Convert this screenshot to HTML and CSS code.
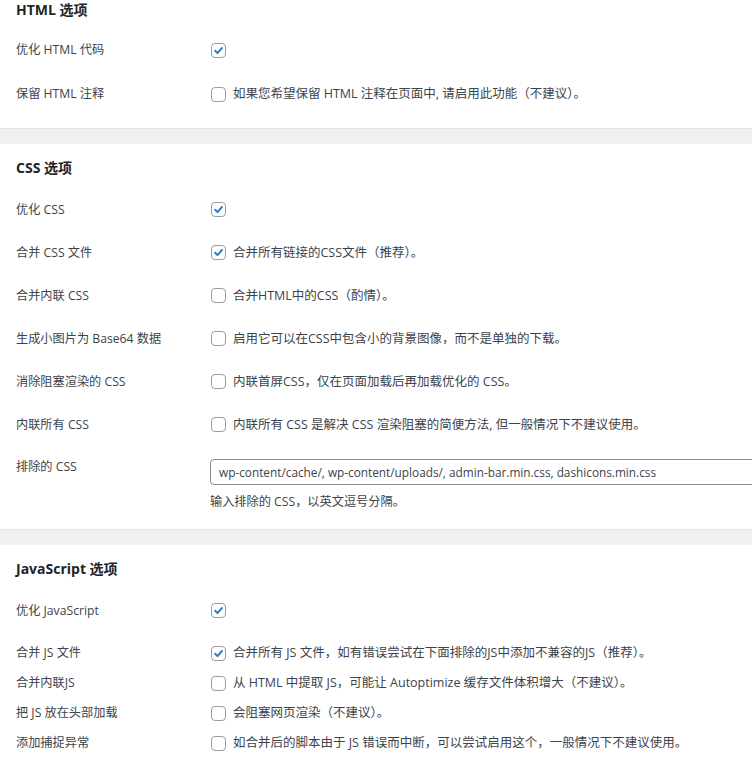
FILE: index.html
```html
<!DOCTYPE html>
<html lang="zh-CN">
<head>
<meta charset="utf-8">
<title>Autoptimize 选项</title>
<link rel="stylesheet" href="styles.css">
</head>
<body>
<section class="panel panel-first">
  <h2 class="title">HTML 选项</h2>
  <div class="row row-tall">
    <div class="label">优化 HTML 代码</div>
    <div class="field"><span class="cb checked"><svg viewBox="0 0 14 14"><path d="M3.4 7.3 L5.9 9.8 L10.7 4.3"/></svg></span></div>
  </div>
  <div class="row row-tall">
    <div class="label">保留 HTML 注释</div>
    <div class="field"><span class="cb"></span><span class="desc">如果您希望保留 HTML 注释在页面中, 请启用此功能（不建议）。</span></div>
  </div>
</section>
<div class="sep"></div>
<section class="panel">
  <h2 class="title">CSS 选项</h2>
  <div class="row">
    <div class="label">优化 CSS</div>
    <div class="field"><span class="cb checked"><svg viewBox="0 0 14 14"><path d="M3.4 7.3 L5.9 9.8 L10.7 4.3"/></svg></span></div>
  </div>
  <div class="row">
    <div class="label">合并 CSS 文件</div>
    <div class="field"><span class="cb checked"><svg viewBox="0 0 14 14"><path d="M3.4 7.3 L5.9 9.8 L10.7 4.3"/></svg></span><span class="desc">合并所有链接的CSS文件（推荐）。</span></div>
  </div>
  <div class="row">
    <div class="label">合并内联 CSS</div>
    <div class="field"><span class="cb"></span><span class="desc">合并HTML中的CSS（酌情）。</span></div>
  </div>
  <div class="row">
    <div class="label">生成小图片为 Base64 数据</div>
    <div class="field"><span class="cb"></span><span class="desc">启用它可以在CSS中包含小的背景图像，而不是单独的下载。</span></div>
  </div>
  <div class="row">
    <div class="label">消除阻塞渲染的 CSS</div>
    <div class="field"><span class="cb"></span><span class="desc">内联首屏CSS，仅在页面加载后再加载优化的 CSS。</span></div>
  </div>
  <div class="row">
    <div class="label">内联所有 CSS</div>
    <div class="field"><span class="cb"></span><span class="desc">内联所有 CSS 是解决 CSS 渲染阻塞的简便方法, 但一般情况下不建议使用。</span></div>
  </div>
  <div class="row row-input">
    <div class="label">排除的 CSS</div>
    <div class="field-col">
      <div class="text-input">wp-content/cache/, wp-content/uploads/, admin-bar.min.css, dashicons.min.css</div>
      <div class="help">输入排除的 CSS，以英文逗号分隔。</div>
    </div>
  </div>
</section>
<div class="sep"></div>
<section class="panel">
  <h2 class="title">JavaScript 选项</h2>
  <div class="row">
    <div class="label">优化 JavaScript</div>
    <div class="field"><span class="cb checked"><svg viewBox="0 0 14 14"><path d="M3.4 7.3 L5.9 9.8 L10.7 4.3"/></svg></span></div>
  </div>
  <div class="compact-group">
    <div class="row row-compact">
      <div class="label">合并 JS 文件</div>
      <div class="field"><span class="cb checked"><svg viewBox="0 0 14 14"><path d="M3.4 7.3 L5.9 9.8 L10.7 4.3"/></svg></span><span class="desc">合并所有 JS 文件，如有错误尝试在下面排除的JS中添加不兼容的JS（推荐）。</span></div>
    </div>
    <div class="row row-compact">
      <div class="label">合并内联JS</div>
      <div class="field"><span class="cb"></span><span class="desc">从 HTML 中提取 JS，可能让 Autoptimize 缓存文件体积增大（不建议）。</span></div>
    </div>
    <div class="row row-compact">
      <div class="label">把 JS 放在头部加载</div>
      <div class="field"><span class="cb"></span><span class="desc">会阻塞网页渲染（不建议）。</span></div>
    </div>
    <div class="row row-compact">
      <div class="label">添加捕捉异常</div>
      <div class="field"><span class="cb"></span><span class="desc">如合并后的脚本由于 JS 错误而中断，可以尝试启用这个，一般情况下不建议使用。</span></div>
    </div>
  </div>
</section>
</body>
</html>
```

FILE: styles.css
```css
html, body {
  margin: 0;
  padding: 0;
  background: #ffffff;
  overflow: hidden;
}

body {
  font-family: "Open Sans", "Noto Sans CJK SC", sans-serif;
  font-size: 12px;
  color: #3c434a;
  width: 752px;
  height: 758px;
}

.panel {
  padding: 16px 0 0 16px;
}

.panel-first {
  padding-top: 2px;
  padding-bottom: 12px;
}

.title {
  margin: 0 0 12px 0;
  font-size: 14px;
  line-height: 16px;
  font-weight: 700;
  color: #1d2327;
}

.panel-first .title {
  margin-bottom: 10px;
}

.row {
  display: grid;
  grid-template-columns: 195px 1fr;
  align-items: center;
  height: 43px;
}

.row-tall {
  height: 44px;
}

.row-compact {
  height: 30px;
}

.compact-group {
  padding-top: 6px;
}

.label {
  line-height: 16px;
  white-space: nowrap;
  font-size: 12.2px;
}

.field {
  display: flex;
  align-items: center;
  gap: 7px;
  white-space: nowrap;
}

.desc {
  line-height: 16px;
  font-size: 12.5px;
}

.cb {
  box-sizing: border-box;
  width: 15px;
  height: 15px;
  border: 1px solid #9a9da2;
  border-radius: 4px;
  background: #fff;
  display: inline-flex;
  align-items: center;
  justify-content: center;
  flex: none;
}

.cb svg {
  width: 13px;
  height: 13px;
}

.cb path {
  fill: none;
  stroke: #2c7bc9;
  stroke-width: 2.1;
  stroke-linecap: round;
  stroke-linejoin: round;
}

.row-input {
  height: auto;
  align-items: start;
  padding: 13px 0 19px 0;
}

.field-col {
  display: flex;
  flex-direction: column;
  margin-left: -1px;
}

.text-input {
  box-sizing: border-box;
  width: 620px;
  height: 26px;
  border: 1px solid #8c8f94;
  border-radius: 4px;
  padding: 0 8px;
  line-height: 24px;
  white-space: nowrap;
  color: #3c434a;
  font-size: 11.8px;
}

.help {
  margin-top: 9px;
  line-height: 16px;
  font-size: 12.2px;
}

.sep {
  height: 15px;
  background: #f0f0f1;
  border-top: 1px solid #e2e2e4;
}
```
